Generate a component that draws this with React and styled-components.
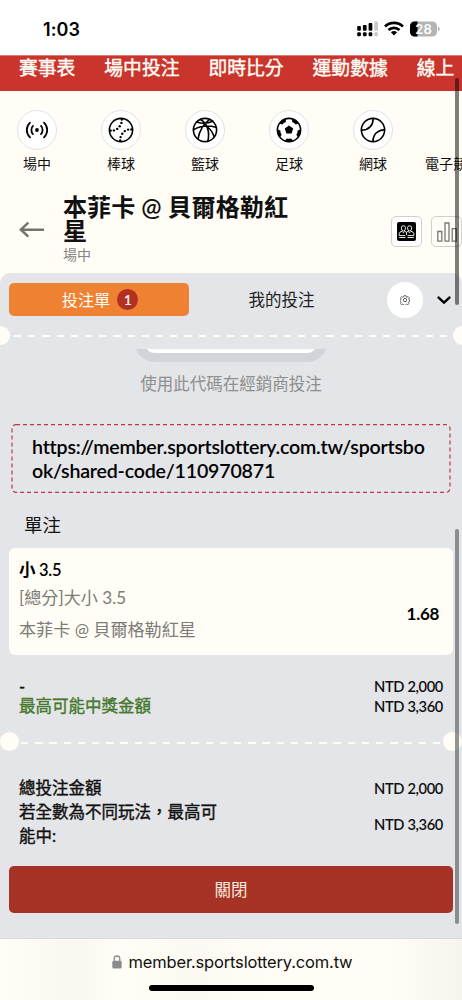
import React from 'react';
import styled, { createGlobalStyle } from 'styled-components';

const cream = '#fffdf5';
const panel = '#e4e5e8';

const Global = createGlobalStyle`
  * { box-sizing: border-box; }
  body { margin: 0; background: ${cream}; }
`;

const Screen = styled.div`
  position: relative;
  width: 462px;
  height: 1000px;
  overflow: hidden;
  display: flex;
  flex-direction: column;
  background: ${cream};
  color: #111;
  font-family: Lato, 'Noto Sans CJK TC', sans-serif;
  font-size: 16.5px;
  font-variant-ligatures: none;
`;

const StatusBar = styled.header`
  height: 55px;
  flex: none;
  display: flex;
  align-items: flex-start;
  justify-content: space-between;
  padding: 19px 22px 0 43px;
  background: #fff;
`;

const Clock = styled.span`
  font: 600 18px/21px Inter, sans-serif;
  letter-spacing: 0.1px;
  color: #000;
`;

const StatusIcons = styled.div`
  display: flex;
  align-items: center;
  gap: 6px;
  padding-top: 2px;
`;

const Nav = styled.nav`
  height: 36px;
  flex: none;
  display: flex;
  gap: 29px;
  padding-left: 19px;
  border-top: 1px solid #dc7a74;
  background: #c9342c;
  overflow: hidden;
`;

const NavItem = styled.a`
  flex: none;
  color: ${cream};
  font-size: 18.8px;
  line-height: 24px;
  white-space: nowrap;
  -webkit-text-stroke: 0.4px ${cream};
`;

const Sports = styled.div`
  height: 96px;
  flex: none;
  display: flex;
  padding-top: 19px;
  margin-left: -5px;
`;

const Sport = styled.div`
  flex: none;
  width: 84px;
  display: flex;
  flex-direction: column;
  align-items: center;
  font-size: 14px;
  line-height: 20px;
  white-space: nowrap;
  gap: 4px;
  ${p => p.$last && 'align-items: flex-start; padding: 44px 0 0 10px;'}
`;

const SportIcon = styled.span`
  width: 40px;
  height: 40px;
  display: grid;
  place-items: center;
  border: 1px solid #e3e3e5;
  border-radius: 50%;
  background: #fff;
`;

const MatchHeader = styled.section`
  height: 86px;
  flex: none;
  display: flex;
  padding-left: 19px;
`;

const BackButton = styled.button`
  flex: none;
  width: 44px;
  height: 24px;
  margin-top: 31px;
  padding: 0;
  border: 0;
  background: none;
  text-align: left;
  svg { display: block; }
`;

const MatchInfo = styled.div`
  flex: none;
  width: 328px;
  padding-top: 8px;
`;

const MatchTitle = styled.h1`
  width: 240px;
  margin: 0;
  font-size: 24.1px;
  font-weight: 600;
  line-height: 24px;
`;

const MatchState = styled.div`
  margin-top: 2px;
  font-size: 14px;
  line-height: 20px;
  color: #858585;
`;

const HeaderActions = styled.div`
  flex: none;
  display: flex;
  gap: 9px;
  padding-top: 29px;
`;

const SquareButton = styled.button`
  flex: none;
  width: 31px;
  height: 31px;
  padding: 0;
  display: grid;
  place-items: center;
  border: 1px solid #cfcfcc;
  border-radius: 5px;
  background: ${p => (p.$active ? '#fff' : cream)};
`;

const Slip = styled.main`
  height: 665px;
  flex: none;
  border-radius: 10px 10px 0 0;
  background: ${panel};
  overflow: hidden;
`;

const Tabs = styled.div`
  display: flex;
  align-items: center;
  height: 53px;
  padding-left: 9px;
`;

const Tab = styled.button`
  width: ${p => (p.$active ? '180px' : '185px')};
  height: 33px;
  display: flex;
  align-items: center;
  justify-content: center;
  gap: 7px;
  padding: ${p => (p.$active ? '0 0 0 2px' : '0')};
  border: 0;
  border-radius: 5px;
  font: inherit;
  font-size: ${p => (p.$active ? '16.2px' : '16.5px')};
  line-height: 24px;
  color: ${p => (p.$active ? cream : '#222')};
  background: ${p => (p.$active ? '#ee8132' : 'transparent')};
`;

const Count = styled.span`
  width: 21px;
  height: 21px;
  border-radius: 50%;
  background: #b22f22;
  font-size: 14px;
  font-weight: 600;
  line-height: 21px;
  text-align: center;
`;

const GearButton = styled.button`
  width: 36px;
  height: 36px;
  margin: 0 14px 0 13px;
  padding: 0;
  border: 0;
  border-radius: 50%;
  background: #fff;
  display: grid;
  place-items: center;
`;

const Perforation = styled.div`
  display: flex;
  align-items: center;
  justify-content: space-between;
  height: 19px;
  margin: ${p => (p.$wide ? '-0.5px -9.5px 0' : '0')};
  &::before, &::after {
    content: '';
    width: 19px;
    height: 19px;
    flex: none;
    border-radius: 50%;
    background: ${cream};
  }
`;

const Dashes = styled.i`
  width: ${p => p.$width};
  height: 2px;
  margin-top: 2px;
  background: repeating-linear-gradient(90deg, ${cream} 0 7.3px, transparent 7.3px 14.2px);
`;

const CodeFrameClip = styled.div`
  width: 194px;
  height: 13px;
  margin: 4.5px auto 0;
  overflow: hidden;
  display: flex;
  align-items: flex-end;
`;

const CodeFrame = styled.div`
  width: 194px;
  height: 60px;
  flex: none;
  border: 10px solid #d3d4d9;
  border-bottom-width: 9px;
  border-radius: 21px;
  background: #fff;
`;

const Hint = styled.p`
  margin: 10px 0 27px;
  text-align: center;
  line-height: 25px;
  color: #8d8e90;
`;

const LinkBox = styled.div`
  position: relative;
  height: 69px;
  margin: 0 11px;
  padding: 11px 24px 0 21px;
  font-size: 19.6px;
  font-weight: 600;
  line-height: 23.5px;
  letter-spacing: -0.2px;
  color: #000;
  word-break: break-all;
`;

const LinkOutline = styled.svg`
  position: absolute;
  inset: 0;
`;

const SectionTitle = styled.h2`
  margin: 18px 0 9px 24px;
  font-size: 18.4px;
  font-weight: 400;
  line-height: 28px;
`;

const BetCard = styled.article`
  height: 107px;
  margin: 0 9px;
  padding: 10px 14px 0 10px;
  display: flex;
  justify-content: space-between;
  border-radius: 6px;
  background: ${cream};
`;

const Pick = styled.div`
  font-size: 16.5px;
  font-weight: 600;
  line-height: 24px;
  letter-spacing: -0.3px;
  color: #000;
`;

const Detail = styled.div`
  margin-top: ${p => p.$top};
  font-size: 17.1px;
  line-height: 24px;
  color: #7b7b78;
`;

const Odds = styled.strong`
  margin-top: 44px;
  font-size: 17px;
  font-weight: 700;
  line-height: 24px;
  letter-spacing: -0.3px;
  color: #000;
`;

const Totals = styled.div`
  padding: ${p => p.$pad};
`;

const TotalRow = styled.div`
  display: flex;
  align-items: center;
  justify-content: space-between;
  height: ${p => p.$h};
  line-height: 24px;
  color: ${p => (p.$win ? '#47792f' : '#111')};
`;

const Label = styled.span`
  max-width: 206px;
  -webkit-text-stroke: 0.4px currentColor;
`;

const Amount = styled.span`
  font-size: 14.7px;
  font-weight: 600;
  line-height: 20px;
  letter-spacing: -0.38px;
  padding-bottom: 1px;
  color: #111;
`;

const CloseButton = styled.button`
  display: block;
  width: 444px;
  height: 47px;
  margin: 0 9px;
  padding: 0 0 2px;
  border: 0;
  border-radius: 5px;
  background: #a53225;
  color: #f8e9dd;
  font: inherit;
`;

const BrowserBar = styled.footer`
  flex: 1;
  display: flex;
  flex-direction: column;
  align-items: center;
  border-top: 1px solid #d9d9db;
  background: linear-gradient(90deg, #fffdf5, #f9f7ef 16%, #fffdf5 26%, #fbf9f1 42%, #fffdf5 60%, #fffdf5 84%, #f6f4ed);
`;

const Address = styled.div`
  display: flex;
  align-items: center;
  gap: 7px;
  margin-top: 12px;
  padding-left: 2px;
  font: 400 16.5px/22px Inter, sans-serif;
  font-variant-ligatures: none;
  letter-spacing: -0.17px;
  color: #111;
  white-space: nowrap;
`;

const HomeIndicator = styled.i`
  width: 165px;
  height: 6px;
  margin-top: 12px;
  border-radius: 3px;
  background: #000;
`;

const ScrollThumb = styled.i`
  position: absolute;
  left: 455px;
  top: ${p => p.$top}px;
  width: 4px;
  height: ${p => p.$height}px;
  border-radius: 2px;
  background: ${p => p.$tone};
`;

const Signal = () => (
  <svg width="21" height="16" viewBox="0 0 21 16">
    {[0.2, 5.9, 11.6, 17.3].map((x, i) => (
      <g key={x} fill={i === 3 ? '#c8c8c8' : '#000'}>
        <rect x={x} y={[5, 4, 2, 0.5][i]} width="3.7" height={[4.8, 5.8, 7.8, 9.3][i]} rx="1" />
        <rect x={x} y="11.2" width="3.7" height="4" rx="1.2" />
      </g>
    ))}
  </svg>
);

const Wifi = () => (
  <svg width="20" height="16" viewBox="0 0 20 16" fill="none" stroke="#000" strokeWidth="2.7">
    <path d="M1 5.5a13 13 0 0 1 18 0" />
    <path d="M4.5 9.1a8 8 0 0 1 11 0" />
    <path d="M6.9 11.2Q10 8.9 13.1 11.2L10 14.6Z" fill="#000" stroke="none" />
  </svg>
);

const Battery = () => (
  <svg width="30" height="16" viewBox="0 0 30 16">
    <rect x="0" y="0.5" width="27" height="15" rx="4.5" fill="#b4b4b4" />
    <path d="M4.5.5H7.5V15.5H4.5A4.5 4.5 0 0 1 0 11V5A4.5 4.5 0 0 1 4.5.5Z" fill="#000" />
    <path d="M28 5.5q1.7.7 1.7 2.5T28 10.5Z" fill="#b4b4b4" />
    <text x="13.5" y="12.6" textAnchor="middle" fill="#fff" fontFamily="Inter, sans-serif" fontSize="13" fontWeight="600">28</text>
  </svg>
);

const Ball = ({ children }) => (
  <svg width="26" height="26" viewBox="0 0 26 26" fill="none" stroke="#000" strokeWidth="1.6" strokeLinecap="round">
    <circle cx="13" cy="13" r="11.6" />
    {children}
  </svg>
);

const LiveIcon = () => (
  <svg width="26" height="26" viewBox="0 0 26 26" fill="none" stroke="#000" strokeWidth="1.8" strokeLinecap="round">
    <circle cx="13" cy="13" r="1.9" fill="#000" stroke="none" />
    <path d="M9 8.9a6 6 0 0 0 0 8.2M17 8.9a6 6 0 0 1 0 8.2M6 5.6a10.2 10.2 0 0 0 0 14.8M20 5.6a10.2 10.2 0 0 1 0 14.8" />
  </svg>
);

const Baseball = () => (
  <Ball>
    <g fill="#000" stroke="none">
      {[[5.9, 13.4], [9.2, 11.9], [11.7, 9.2], [13.4, 5.9], [2.6, 13.6], [13.8, 2.6], [20.1, 12.6], [16.8, 14.1], [14.3, 16.8], [12.6, 20.1], [23.4, 12.4], [12.2, 23.4]].map(([x, y]) => (
        <circle key={`${x}-${y}`} cx={x} cy={y} r="1.2" />
      ))}
    </g>
  </Ball>
);

const Basketball = () => (
  <Ball>
    <path d="M4.6 5C10 6.8 16.5 6.3 20.8 4.2M8.3 2.5C14.5 5.5 18.3 14 15.8 24.2M17.6 2.3C12 6.5 7.5 13 6 21.8M1.5 12.8C8 8.7 16.5 8.2 24 10.2M15.5 10C18.5 12.5 20.8 15.5 22 19.6" />
  </Ball>
);

const patch = 'M8.6 1.8Q13 .2 17.4 1.8L15.2 4.6Q13 3.8 10.8 4.6Z';

const Football = () => (
  <Ball>
    <g fill="#000" stroke="none">
      <path d="M13 8.6L17.2 11.6L15.6 16.5H10.4L8.8 11.6Z" />
      {[-36, 36, 108, 180, 252].map(a => <path key={a} d={patch} transform={`rotate(${a} 13 13)`} />)}
    </g>
  </Ball>
);

const Tennis = () => (
  <Ball>
    <path d="M13.2 1.5C13 8.7 8.7 12.8 1.5 13.2M24.5 12.8C17.3 13.3 13.3 17.3 12.8 24.5" />
  </Ball>
);

const sports = [
  ['場中', LiveIcon],
  ['棒球', Baseball],
  ['籃球', Basketball],
  ['足球', Football],
  ['網球', Tennis],
];

const Arrow = () => (
  <svg width="26" height="18" viewBox="0 0 26 18" fill="none" stroke="#74746f" strokeWidth="2.5">
    <path d="M1.7 8.7H25M9.3 1.7L1.8 8.7L9.3 15.7" />
  </svg>
);

const LineupIcon = () => (
  <svg width="19" height="19" viewBox="0 0 19 19">
    <rect width="19" height="19" rx="2" fill="#000" />
    <g fill="none" stroke="#fff" strokeWidth="0.9">
      <path d="M4.3 5.8Q4.3 3.8 6.4 3.8T8.5 5.8Q8.5 9 6.4 9T4.3 5.8ZM10.5 5.8Q10.5 3.8 12.6 3.8T14.7 5.8Q14.7 9 12.6 9T10.5 5.8Z" />
      <path d="M2.2 13.5V11.5Q2.4 9.8 5 9.3L6.4 10.8L8 9.3L9.5 10.3L11 9.3L12.6 10.8L14 9.3Q16.6 9.8 16.8 11.5V13.5M9.5 10.3V13M2.2 13.6H8.4M10.6 13.6H16.8M2.2 15.5H8.4M10.6 15.5H16.8" />
    </g>
  </svg>
);

const StatsIcon = () => (
  <svg width="20" height="20" viewBox="0 0 20 20" fill="none" stroke="#777773" strokeWidth="1.3">
    <path d="M.8 9.5H4.8V19.2H.8ZM8 1H12V19.2H8ZM15.2 6.7H19.2V19.2H15.2Z" />
  </svg>
);

const GearIcon = () => (
  <svg width="10" height="10" viewBox="0 0 24 24" fill="none" stroke="#444" strokeWidth="2">
    <path d="M10 1.5h4l.7 3 2.2.9 2.7-1.6 2.8 2.8-1.6 2.7.9 2.1 1.8.6v3.3l-2.7.7-.9 2.2 1.6 2.6-2.8 2.8-2.7-1.6-2.1.9-.7 2.6h-3.8l-.6-2.6-2.2-.9-2.7 1.6-2.8-2.8 1.6-2.6-.9-2.2-2.3-.7v-3.3l2.3-.6.9-2.1-1.6-2.7 2.8-2.8 2.7 1.6 2.2-.9Z" />
    <circle cx="12" cy="12" r="4" />
  </svg>
);

const Chevron = () => (
  <svg width="14" height="10" viewBox="0 0 14 10" fill="none" stroke="#000" strokeWidth="2.4">
    <path d="M.8 1.9L7 7.7L13.2 1.9" />
  </svg>
);

const Lock = () => (
  <svg width="10" height="14" viewBox="0 0 10 14">
    <rect x="0.3" y="5.8" width="9.4" height="7.7" rx="1.5" fill="#8b8b8d" />
    <path d="M2.2 6V3.8a2.8 2.8 0 0 1 5.6 0V6" fill="none" stroke="#8b8b8d" strokeWidth="1.3" />
  </svg>
);

export default function App() {
  return (
    <Screen lang="zh-TW">
      <Global />
      <StatusBar>
        <Clock>1:03</Clock>
        <StatusIcons>
          <Signal /><Wifi /><Battery />
        </StatusIcons>
      </StatusBar>
      <Nav>
        {['賽事表', '場中投注', '即時比分', '運動數據', '線上'].map(t => <NavItem key={t}>{t}</NavItem>)}
      </Nav>
      <Sports>
        {sports.map(([name, Icon]) => (
          <Sport key={name}><SportIcon><Icon /></SportIcon>{name}</Sport>
        ))}
        <Sport $last>電子競</Sport>
      </Sports>
      <MatchHeader>
        <BackButton><Arrow /></BackButton>
        <MatchInfo>
          <MatchTitle>本菲卡 @ 貝爾格勒紅星</MatchTitle>
          <MatchState>場中</MatchState>
        </MatchInfo>
        <HeaderActions>
          <SquareButton $active><LineupIcon /></SquareButton>
          <SquareButton><StatsIcon /></SquareButton>
        </HeaderActions>
      </MatchHeader>
      <Slip>
        <Tabs>
          <Tab $active>投注單<Count>1</Count></Tab>
          <Tab>我的投注</Tab>
          <GearButton><GearIcon /></GearButton>
          <Chevron />
        </Tabs>
        <Perforation $wide><Dashes $width="434px" /></Perforation>
        <CodeFrameClip><CodeFrame /></CodeFrameClip>
        <Hint>使用此代碼在經銷商投注</Hint>
        <LinkBox>
          <LinkOutline width="440" height="69">
            <rect x="1" y="0.6" width="438" height="67.8" rx="4" fill="none" stroke="#bd3b36" strokeWidth="1.2" strokeDasharray="4 3" />
          </LinkOutline>
          https://member.sportslottery.com.tw/sportsbook/shared-code/110970871
        </LinkBox>
        <SectionTitle>單注</SectionTitle>
        <BetCard>
          <div>
            <Pick>小 3.5</Pick>
            <Detail $top="4px">[總分]大小 3.5</Detail>
            <Detail $top="8px">本菲卡 @ 貝爾格勒紅星</Detail>
          </div>
          <Odds>1.68</Odds>
        </BetCard>
        <Totals $pad="22px 19px 16px">
          <TotalRow $h="19px"><Label>-</Label><Amount>NTD 2,000</Amount></TotalRow>
          <TotalRow $h="20px" $win><Label>最高可能中獎金額</Label><Amount>NTD 3,360</Amount></TotalRow>
        </Totals>
        <Perforation><Dashes $width="421px" /></Perforation>
        <Totals $pad="25px 19px 18px">
          <TotalRow $h="24px"><Label>總投注金額</Label><Amount>NTD 2,000</Amount></TotalRow>
          <TotalRow $h="48px"><Label>若全數為不同玩法，最高可能中:</Label><Amount>NTD 3,360</Amount></TotalRow>
        </Totals>
        <CloseButton>關閉</CloseButton>
      </Slip>
      <BrowserBar>
        <Address><Lock />member.sportslottery.com.tw</Address>
        <HomeIndicator />
      </BrowserBar>
      <ScrollThumb $top={78} $height={227} $tone="rgba(0,0,0,.5)" />
      <ScrollThumb $top={529} $height={395} $tone="rgba(80,80,82,.6)" />
    </Screen>
  );
}
